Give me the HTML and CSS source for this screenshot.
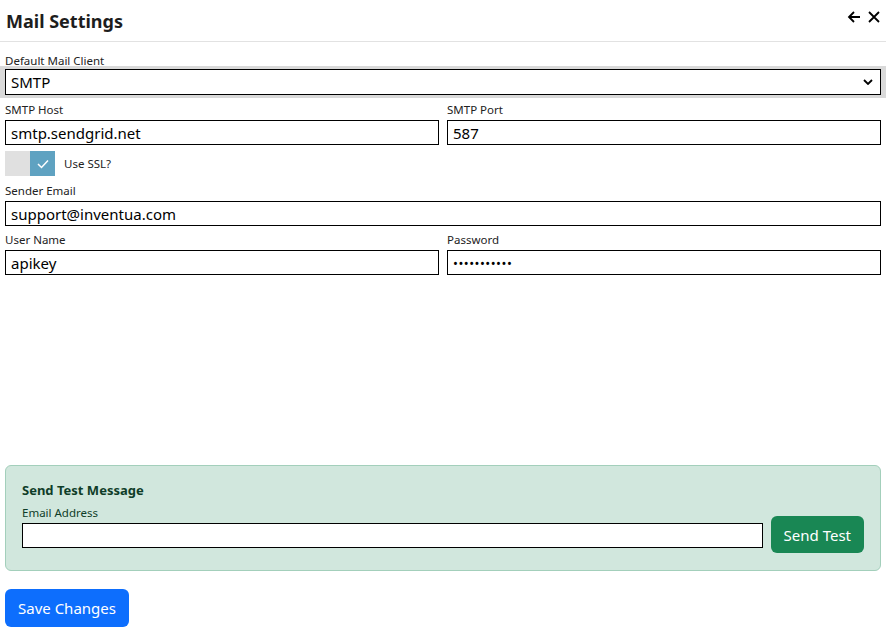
FILE: index.html
```html
<!DOCTYPE html>
<html lang="en">
<head>
  <meta charset="UTF-8" />
  <title>Mail Settings</title>
  <link rel="stylesheet" href="styles.css">
</head>
<body>
  <div class="panel">
    <div class="panel-header">
      <h1>Mail Settings</h1>
      <div class="header-actions">
        <button class="icon-btn" title="Back">
          <svg width="14" height="14" viewBox="0 0 14 14"><path d="M13 7H2M7 2L2 7l5 5" fill="none" stroke="#000" stroke-width="1.8"/></svg>
        </button>
        <button class="icon-btn" title="Close">
          <svg width="14" height="14" viewBox="0 0 14 14"><path d="M2 2l10 10M12 2L2 12" fill="none" stroke="#000" stroke-width="1.8"/></svg>
        </button>
      </div>
    </div>

    <div class="form">
      <div class="field">
        <label>Default Mail Client</label>
        <div class="select-wrap">
          <select class="select">
            <option>SMTP</option>
          </select>
        </div>
      </div>

      <div class="row">
        <div class="field">
          <label>SMTP Host</label>
          <input type="text" value="smtp.sendgrid.net">
        </div>
        <div class="field">
          <label>SMTP Port</label>
          <input type="text" value="587">
        </div>
      </div>

      <div class="toggle-row">
        <div class="toggle">
          <span class="toggle-off"></span>
          <span class="toggle-on">
            <svg width="12" height="10" viewBox="0 0 12 10"><path d="M1 5l3.5 3.5L11 1.5" fill="none" stroke="#fff" stroke-width="1.5"/></svg>
          </span>
        </div>
        <span class="toggle-label">Use SSL?</span>
      </div>

      <div class="field sender">
        <label>Sender Email</label>
        <input type="text" value="support@inventua.com">
      </div>

      <div class="row">
        <div class="field">
          <label>User Name</label>
          <input type="text" value="apikey">
        </div>
        <div class="field">
          <label>Password</label>
          <input type="password" value="apikeysecre">
        </div>
      </div>
    </div>

    <div class="test-card">
      <h2>Send Test Message</h2>
      <label>Email Address</label>
      <div class="test-row">
        <input type="text" value="">
        <button class="btn btn-success">Send Test</button>
      </div>
    </div>

    <button class="btn btn-primary save-btn">Save Changes</button>
  </div>
</body>
</html>
```

FILE: styles.css
```css
body {
  margin: 0;
  font-family: "Noto Sans", "Open Sans", sans-serif;
  color: #212529;
  background: #fff;
}

.panel {
  width: 886px;
}

.panel-header {
  display: flex;
  align-items: center;
  justify-content: space-between;
  height: 42px;
  padding: 0 5px 0 6px;
  border-bottom: 1px solid #e2e2e2;
  box-sizing: border-box;
}

h1 {
  margin: 0;
  font-size: 18px;
  font-weight: 700;
  color: #1d1d1d;
}

.header-actions {
  display: flex;
  gap: 6px;
  margin-top: -8px;
}

.icon-btn {
  background: none;
  border: none;
  padding: 0;
  width: 14px;
  height: 14px;
  cursor: pointer;
}

.form {
  padding: 12px 5px 0 5px;
}

.field {
  display: flex;
  flex-direction: column;
  flex: 1;
}

label {
  font-size: 11.5px;
  color: #222;
  line-height: 14px;
  margin-bottom: 3px;
}

input[type="text"],
input[type="password"],
.select {
  height: 25px;
  border: 1px solid #000;
  border-radius: 0;
  padding: 0 5px;
  font-family: inherit;
  font-size: 15px;
  color: #000;
  box-sizing: border-box;
  width: 100%;
  background: #fff;
  margin-bottom: 5px;
}

.sender input[type="text"] {
  margin-bottom: 7px;
}

input[type="password"] {
  font-size: 13px;
  letter-spacing: 0.5px;
}

.select-wrap {
  background: #d9d9d9;
  margin: -5px -5px 5px -5px;
  padding: 3px 5px 3px 5px;
}

.select {
  height: 26px;
  margin: 0;
  appearance: none;
  background: #fff url("data:image/svg+xml,%3Csvg xmlns='http://www.w3.org/2000/svg' width='10' height='6'%3E%3Cpath d='M1 1l4 4 4-4' fill='none' stroke='%23000' stroke-width='1.8'/%3E%3C/svg%3E") no-repeat right 7px center;
}

.row {
  display: flex;
  gap: 8px;
}

.toggle-row {
  display: flex;
  align-items: center;
  gap: 9px;
  margin: 1px 0 8px 0;
}

.toggle {
  display: flex;
  height: 25px;
}

.toggle-off {
  width: 25px;
  background: #e0e0e0;
}

.toggle-on {
  width: 25px;
  background: #5fa2c1;
  display: flex;
  align-items: center;
  justify-content: center;
}

.toggle-label {
  font-size: 11.5px;
  color: #222;
}

.test-card {
  margin: 185px 5px 0 5px;
  background: #d1e7dd;
  border: 1px solid #a3cfbb;
  border-radius: 6px;
  padding: 15px 16px 17px 16px;
  color: #0f3d28;
}

.test-card h2 {
  margin: 0 0 1px 0;
  font-size: 13px;
  font-weight: 700;
}

.test-card label {
  color: #0f3d28;
}

.test-row {
  display: flex;
  align-items: flex-end;
  gap: 8px;
  margin-top: -6px;
}

.test-row input[type="text"] {
  margin-bottom: 5px;
  flex: 1;
}

.btn {
  border: none;
  border-radius: 6px;
  color: #fff;
  font-family: inherit;
  font-size: 15px;
  cursor: pointer;
}

.btn-success {
  background: #198754;
  height: 37px;
  padding: 0 13px;
}

.btn-primary {
  background: #0d6efd;
}

.save-btn {
  margin: 18px 0 0 5px;
  height: 38px;
  padding: 0 13px;
}
```
